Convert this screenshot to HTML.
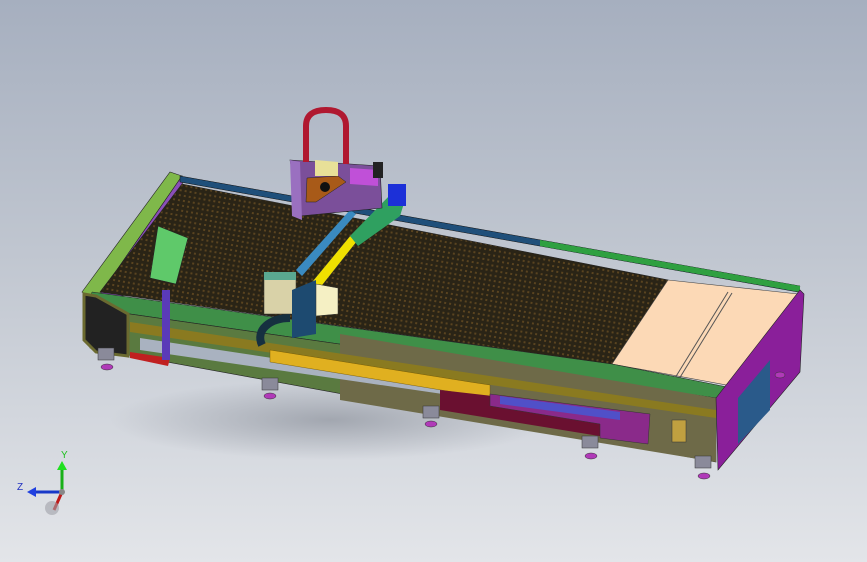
<!DOCTYPE html>
<html><head><style>
html,body{margin:0;padding:0}
body{width:867px;height:562px;overflow:hidden;background:linear-gradient(#a6afbf 0%,#c0c6d0 45%,#e3e5e9 100%);}
svg{display:block}
</style></head><body>
<svg width="867" height="562" viewBox="0 0 867 562" xmlns="http://www.w3.org/2000/svg">
<defs>
<pattern id="grate" width="5" height="5" patternUnits="userSpaceOnUse" patternTransform="rotate(10)">
<rect width="5" height="5" fill="#2a2416"/><rect width="2" height="2" fill="#5a4420"/>
</pattern>
<radialGradient id="sh" cx="50%" cy="50%" r="50%"><stop offset="0" stop-color="#8d929c" stop-opacity=".7"/><stop offset="1" stop-color="#8d929c" stop-opacity="0"/></radialGradient>
</defs>
<ellipse cx="330" cy="420" rx="220" ry="40" fill="url(#sh)"/>
<polygon points="82,292 170,172 182,176 96,300" fill="#7fb84a" stroke="#222" stroke-width=".6"/>
<polygon points="96,300 182,176 186,260 170,288" fill="#8a4fb8" stroke="#222" stroke-width=".6"/>
<polygon points="180,176 800,286 798,292 180,182" fill="#1f4f7a" stroke="#111" stroke-width=".5"/>
<polygon points="540,240 800,286 800,292 540,246" fill="#2fa040"/>
<polygon points="182,184 668,280 612,364 100,292" fill="url(#grate)" stroke="#222" stroke-width=".6"/>
<polygon points="668,280 798,294 732,386 612,364" fill="#fcd9b6" stroke="#444" stroke-width=".6"/>
<line x1="728" y1="292" x2="675" y2="378" stroke="#555"/>
<line x1="732" y1="293" x2="679" y2="379" stroke="#555"/>
<polygon points="158,226 188,238 176,284 150,278" fill="#5fc96a" stroke="#222" stroke-width=".6"/>
<polygon points="92,292 612,364 732,388 716,398 88,308" fill="#3f8f48" stroke="#222" stroke-width=".5"/>
<polygon points="88,308 716,398 716,462 90,348" fill="#5a7a40" stroke="#222" stroke-width=".6"/>
<polygon points="340,334 716,398 716,462 340,400" fill="#6e6a48" />
<polygon points="130,322 716,410 716,418 130,332" fill="#8a7a20"/>
<polygon points="140,338 470,388 470,398 140,350" fill="#a9b2c0"/>
<polygon points="270,350 470,382 490,385 490,398 270,362" fill="#e0b020" stroke="#6a5000" stroke-width=".4"/>
<polygon points="440,390 650,414 648,444 440,410" fill="#6a1030"/>
<polygon points="490,394 650,414 648,444 600,438 600,424 490,406" fill="#8a2a8a" stroke="#333" stroke-width=".5"/>
<polygon points="500,396 620,412 620,420 500,404" fill="#5050c8"/>
<polygon points="84,294 96,296 128,314 128,356 96,352 84,340" fill="#222" stroke="#6b6a30" stroke-width="3"/>
<polygon points="716,398 800,290 804,294 800,372 718,470" fill="#8a1f9a" stroke="#222" stroke-width=".6"/>
<polygon points="738,398 770,360 770,410 738,444" fill="#2a5a8a"/>
<polygon points="130,352 170,358 168,366 130,358" fill="#c02020"/>
<rect x="162" y="290" width="8" height="70" fill="#5a3ab8"/>
<path d="M262 345 C255 330,270 318,290 318" stroke="#163040" stroke-width="8" fill="none"/>
<!-- gantry -->
<polygon points="296,270 350,210 356,214 302,276" fill="#3a8ac0"/>
<polygon points="312,282 350,236 358,240 320,288" fill="#f0e000" stroke="#333" stroke-width=".5"/>
<polygon points="350,236 395,190 405,200 400,216 358,246" fill="#2fa060"/>
<rect x="388" y="184" width="18" height="22" fill="#1c30d8"/>
<polygon points="264,274 296,274 296,314 264,314" fill="#d9d2a8" stroke="#333" stroke-width=".5"/>
<polygon points="292,290 316,280 316,334 292,338" fill="#1d4a70"/>
<polygon points="316,284 338,288 338,314 316,316" fill="#f5f0c4" stroke="#333" stroke-width=".5"/>
<polygon points="264,272 296,272 296,280 264,280" fill="#5aa890"/>
<polygon points="290,160 380,166 382,208 300,216" fill="#7b4f9a" stroke="#222" stroke-width=".6"/>
<polygon points="290,160 300,162 302,220 292,216" fill="#9a70c0"/>
<polygon points="307,178 338,176 346,182 316,202 306,202" fill="#a85a18" stroke="#222" stroke-width=".5"/>
<circle cx="325" cy="187" r="5" fill="#111"/>
<polygon points="315,160 338,162 338,176 315,176" fill="#e8e098"/>
<polygon points="350,168 378,170 378,186 350,184" fill="#c050d8"/>
<path d="M306 162 L306 126 Q306 110 326 110 Q346 110 346 126 L346 164" fill="none" stroke="#b01830" stroke-width="6"/>
<rect x="373" y="162" width="10" height="16" fill="#222"/>
<g fill="#b03ab8" stroke="#333" stroke-width=".5">
<ellipse cx="107" cy="367" rx="6" ry="3"/><ellipse cx="270" cy="396" rx="6" ry="3"/><ellipse cx="431" cy="424" rx="6" ry="3"/><ellipse cx="591" cy="456" rx="6" ry="3"/><ellipse cx="704" cy="476" rx="6" ry="3"/><ellipse cx="780" cy="375" rx="5" ry="3"/>
</g>
<g fill="#8a8a9a" stroke="#333" stroke-width=".5">
<rect x="98" y="348" width="16" height="12"/><rect x="262" y="378" width="16" height="12"/><rect x="423" y="406" width="16" height="12"/><rect x="582" y="436" width="16" height="12"/><rect x="695" y="456" width="16" height="12"/>
</g>
<rect x="672" y="420" width="14" height="22" fill="#c0a040" stroke="#333" stroke-width=".5"/>
<line x1="62" y1="492" x2="62" y2="468" stroke="#18b018" stroke-width="3"/>
<polygon points="57,470 62,461 67,470" fill="#20e020"/>
<line x1="62" y1="492" x2="34" y2="492" stroke="#1838c8" stroke-width="3"/>
<polygon points="36,487 27,492 36,497" fill="#2040e0"/>
<line x1="62" y1="492" x2="54" y2="510" stroke="#c01818" stroke-width="3"/>
<circle cx="52" cy="508" r="7" fill="#a0a0a8" opacity=".6"/>
<circle cx="62" cy="492" r="3" fill="#888"/>
<text x="61" y="458" font-family="Liberation Sans, sans-serif" font-size="10" fill="#20c020">Y</text>
<text x="17" y="490" font-family="Liberation Sans, sans-serif" font-size="10" fill="#2030c0">Z</text>
</svg>
</body></html>
